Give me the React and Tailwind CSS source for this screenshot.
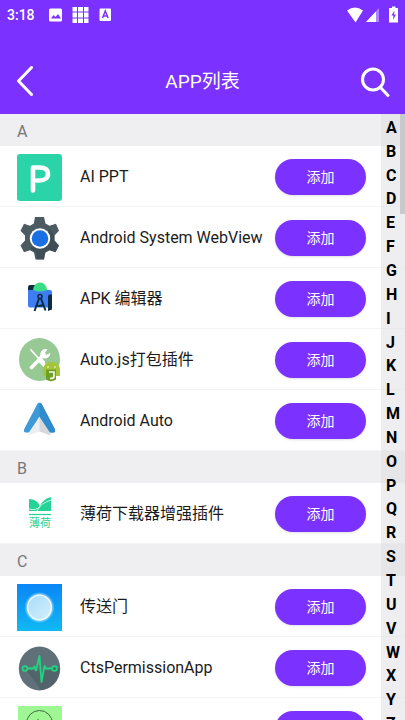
import { useState } from 'react'

// App list grouped by first letter; each entry names the drawing used as its icon.
const SECTIONS = [
  {
    letter: 'A',
    apps: [
      { id: 'ppt', name: 'AI PPT' },
      { id: 'webview', name: 'Android System WebView' },
      { id: 'apk', name: 'APK 编辑器' },
      { id: 'autojs', name: 'Auto.js打包插件' },
      { id: 'auto', name: 'Android Auto' },
    ],
  },
  { letter: 'B', apps: [{ id: 'bohe', name: '薄荷下载器增强插件' }] },
  {
    letter: 'C',
    apps: [
      { id: 'portal', name: '传送门' },
      { id: 'cts', name: 'CtsPermissionApp' },
      { id: 'clock', name: '' },
    ],
  },
]

const LETTERS = 'ABCDEFGHIJKLMNOPQRSTUVWXYZ'.split('')

function AppIcon({ id }) {
  const props = { className: 'h-[47px] w-[45px] shrink-0', viewBox: '0 0 45 47', 'aria-hidden': true }
  switch (id) {
    case 'ppt':
      return (
        <svg {...props}>
          <rect width="45" height="47" rx="3" fill="#2bd3a8" />
          <path d="M16 36.500V13.500h6.500c5.500 0 8.500 2.200 8.500 6.200s-3 6.800-8.500 6.800H20" fill="none" stroke="#fff" strokeWidth="4.600" strokeLinecap="round" strokeLinejoin="round" />
        </svg>
      )
    case 'webview': // gear with a blue hub
      return (
        <svg {...props}>
          <path d="M18 2h9l1.500 6.500 4 2.300L39 8.800l3 7-4.500 4.700v5l4.500 5-3.500 6.700-6-2-4.200 2.300L27 44.500h-8.500L17 37.500l-4-2.300-6 2L3.500 30.500 8 25.500v-5L3.500 15.800 7 8.800l6 2 3.800-2.300z" fill="#4c5b62" />
          <path d="M13 33l6 4.500 1 7h7l1.500-7 4-2.300 6 2 3.500-6.700-4.500-5v-5L33 14z" fill="#36464e" opacity=".55" />
          <circle cx="23" cy="23.500" r="10.200" fill="#fff" />
          <circle cx="23" cy="23.500" r="8.300" fill="#1a6fe3" />
        </svg>
      )
    case 'apk': // folder, android head and a pair of compasses
      return (
        <svg {...props}>
          <path d="M11 12q0-3 2-3h5l2 4v6h-9z" fill="#0b2c42" />
          <path d="M11 14h22q2 0 2 2v13h-3v2.500H13q-2 0-2-2z" fill="#3f7df4" />
          <path d="M16 14a7 7.500 0 0 1 14 0q-7 3-14 0z" fill="#3ddc84" />
          <path d="M32 18.500h3v15l-4 1.500V20z" fill="#0b2c42" />
          <circle cx="23" cy="20.500" r="2" fill="none" stroke="#0b2c42" strokeWidth="1.500" />
          <path d="M22 22.500l-4.500 12.500M24 22.500l4.500 12M20 29.500q3 1 6-.5" fill="none" stroke="#0b2c42" strokeWidth="2" />
        </svg>
      )
    case 'autojs': // crossed tools with a small robot badge
      return (
        <svg {...props}>
          <ellipse cx="22.500" cy="22.500" rx="20.500" ry="21.500" fill="#97c994" />
          <path d="M14 13l9 10" stroke="#fff" strokeWidth="1.800" strokeLinecap="round" />
          <path d="M23 23l6 6" stroke="#fff" strokeWidth="5" strokeLinecap="round" />
          <path d="M14.500 30.500L27 17.500" stroke="#fff" strokeWidth="3.600" strokeLinecap="round" />
          <path d="M30 12.500l-3.500 4.500 1.500 2 5-2.500a5 5 0 0 1-9 2.500 5 5 0 0 1 6-6.500z" fill="#fff" stroke="#fff" />
          <path d="M26 33a8 7.500 0 0 1 17 0z" fill="#a4c639" />
          <path d="M30 28l-2-3M39 28l2-3" stroke="#a4c639" strokeWidth="1.200" />
          <path d="M26 32h17v7H26z" fill="#a4c639" />
          <circle cx="31" cy="30" r=".8" fill="#fff" />
          <circle cx="38" cy="30" r=".8" fill="#fff" />
          <path d="M29 32.500h10v10q-5 3.500-10 0z" fill="#6f9f2a" />
          <path d="M32 35h5v4.500q0 2-4 2" fill="none" stroke="#f3fbd8" strokeWidth="1.700" />
        </svg>
      )
    case 'auto': // blue chevron over a grey arrow
      return (
        <svg {...props}>
          <path d="M22.500 16L34 37.500 22.500 33.500 11 37.500z" fill="#eeeef1" />
          <path d="M22.500 16v17.500L34 37.500z" fill="#d7d8dc" />
          <path d="M20.300 6q2.200-2.500 4.400 0L38 31.500q.5 2.500-1.500 3H33L22.500 18.500 12 34.500H8.500q-2-.5-1.500-3z" fill="#3d9ad9" />
          <path d="M22.500 4.800q1.400 0 2.200 1.200L38 31.500q.5 2.500-1.500 3H33L22.500 18.500z" fill="#2f8bcb" />
        </svg>
      )
    case 'bohe': // mint leaves above the brand name
      return (
        <svg {...props}>
          <path d="M12 8q8 0 11 7 3-7 11-9v14H12z" fill="#25d396" />
          <path d="M12 18q8 2 11-3M34 9q-10 3-14 11" fill="none" stroke="#c9f5e4" strokeWidth="1" />
          <path d="M12 23.500h22" stroke="#25d396" strokeWidth="1.200" />
          <text x="23" y="36" textAnchor="middle" fontSize="11" fill="#25d396" fontFamily="'Noto Sans CJK SC', sans-serif" fontWeight="400">
            薄荷
          </text>
        </svg>
      )
    case 'portal':
      return (
        <svg {...props}>
          <defs>
            <linearGradient id="portalSky" x1="0" y1="0" x2="0" y2="1">
              <stop offset="0" stopColor="#0a86f7" />
              <stop offset="1" stopColor="#10b9f3" />
            </linearGradient>
            <radialGradient id="portalGlow">
              <stop offset=".75" stopColor="#fff" stopOpacity=".8" />
              <stop offset="1" stopColor="#fff" stopOpacity="0" />
            </radialGradient>
            <linearGradient id="portalDisc" x1="0" y1="0" x2="1" y2="1">
              <stop offset="0" stopColor="#a9dcfb" />
              <stop offset="1" stopColor="#d3effc" />
            </linearGradient>
          </defs>
          <rect width="45" height="47" fill="url(#portalSky)" />
          <ellipse cx="22.500" cy="23.500" rx="15" ry="15.500" fill="url(#portalGlow)" />
          <ellipse cx="22.500" cy="23.500" rx="11.800" ry="12.300" fill="url(#portalDisc)" stroke="#f4fbff" strokeWidth="1.300" />
        </svg>
      )
    case 'cts': // pulse line on a slate disc
      return (
        <svg {...props}>
          <ellipse cx="22.500" cy="23.500" rx="20.700" ry="22" fill="#607078" />
          <path d="M9 25l15 20q17-3 19-21l-6-2-9 4z" fill="#53636b" />
          <g fill="none" stroke="#1fd680" strokeWidth="1.800" strokeLinejoin="round">
            <circle cx="8" cy="23.500" r="2.400" />
            <circle cx="37.500" cy="23.500" r="2.400" />
            <path d="M10.500 23.500H16l1.500-2 1.500 4 3.500-14.500 2 26 3-16 1.500 2.500h6" />
          </g>
        </svg>
      )
    default:
      return (
        <svg {...props}>
          <rect x="1" width="44" height="47" fill="#9ef793" />
          <circle cx="22.500" cy="17.500" r="13" fill="none" stroke="#3d6b45" strokeWidth="1" />
          <path d="M19 17l2-3 3 4" fill="none" stroke="#3d6b45" strokeWidth="1.400" />
        </svg>
      )
  }
}

function StatusBar() {
  return (
    <div className="flex h-[30px] items-center justify-between px-[7px] text-white">
      <div className="flex items-center">
        <span className="w-[42px] text-sm font-medium">3:18</span>
        <svg width="64" height="16" viewBox="0 0 64 16" aria-hidden="true">
          <rect x="0" y="1.500" width="13" height="13" rx="1.500" fill="#fff" />
          <path d="M2 11.500l2.500-3.500 2 2L9 7l3 4.500z" fill="#7b31ff" />
          <path d="M23.500 0h4.500v4.500h-4.500zM29 0h5v4.500h-5zM35 0h4.500v4.500H35zM23.500 5.500h4.500v5h-4.500zM29 5.500h5v5h-5zM35 5.500h4.500v5H35zM23.500 11.500h4.500V16h-4.500zM29 11.500h5V16h-5zM35 11.500h4.500V16H35z" fill="#fff" />
          <rect x="50.500" y="1.500" width="11.500" height="12.500" rx="1" fill="#fff" />
          <path d="M53.500 11l2.800-7 2.800 7M54.500 9h3.600" fill="none" stroke="#7b31ff" strokeWidth="1.500" />
        </svg>
      </div>
      <svg width="51" height="18" viewBox="0 0 51 18" aria-hidden="true">
        <path d="M0 4.500q8-6 16 0L8.500 16.500z" fill="#fff" />
        <path d="M32 2v14H19z" fill="#fff" opacity=".4" />
        <path d="M29 5.500V16H19z" fill="#fff" />
        <path d="M43 2h2V.5h3.500V2H51v14.500h-9V2z" fill="#fff" />
        <path d="M47.500 4.500l-3 5h2l-.5 4.500 3-5.500h-2z" fill="#7b31ff" />
      </svg>
    </div>
  )
}

function Header() {
  return (
    <header className="z-10 shrink-0 bg-[#7b31ff] text-white">
      <StatusBar />
      <div className="flex h-[84px] items-center justify-between px-[15px] pt-5">
        <button type="button" aria-label="返回">
          <svg width="30" height="32" viewBox="0 0 30 32" fill="none" stroke="currentColor" strokeWidth="3" strokeLinecap="round" strokeLinejoin="round" aria-hidden="true">
            <path d="M16.500 1.500L3.500 15l13 13.500" />
          </svg>
        </button>
        <h1 className="text-[19px] leading-6 font-normal">APP列表</h1>
        <button type="button" aria-label="搜索">
          <svg width="30" height="32" viewBox="0 0 30 32" fill="none" stroke="currentColor" strokeWidth="3" strokeLinecap="round" aria-hidden="true">
            <circle cx="13" cy="13.500" r="10.500" />
            <path d="M20.500 21.500l7.500 8" />
          </svg>
        </button>
      </div>
    </header>
  )
}

function AppRow({ app, added, onToggle }) {
  return (
    <li className="flex h-[61px] items-center border-b border-[#f4f4f6] pt-[2px] pr-[39px] pl-[17px]">
      <AppIcon id={app.id} />
      <span className="ml-[18px] flex-1 text-base whitespace-nowrap text-[#1c1c1c]">{app.name}</span>
      <button
        type="button"
        aria-label={`添加 ${app.name}`}
        aria-pressed={added}
        onClick={onToggle}
        className="h-9 w-[91px] shrink-0 rounded-full bg-[#7b31ff] text-sm text-white shadow-sm"
      >
        添加
      </button>
    </li>
  )
}

export default function App() {
  const [added, setAdded] = useState({})
  const toggle = (id) => setAdded((prev) => ({ ...prev, [id]: !prev[id] }))

  return (
    <div className="flex h-screen flex-col overflow-hidden bg-white font-[Roboto,'Noto_Sans_CJK_SC',sans-serif]">
      <Header />
      <main className="relative min-h-0 flex-1 overflow-hidden">
        {SECTIONS.map((section) => (
          <section key={section.letter} id={section.letter}>
            <h2 className="flex h-8 items-center bg-[#efeef1] pt-1 pl-[17px] text-base font-normal text-[#777]">
              {section.letter}
            </h2>
            <ul>
              {section.apps.map((app) => (
                <AppRow key={app.id} app={app} added={!!added[app.id]} onToggle={() => toggle(app.id)} />
              ))}
            </ul>
          </section>
        ))}

        {/* Letter index floats over the list */}
        <nav className="absolute top-0 right-0 grid h-[622px] w-6 auto-rows-fr bg-[#dedee2]/50 pt-[2px] pl-[5px]">
          {LETTERS.map((l) => (
            <a key={l} href={`#${l}`} className="flex items-center text-base leading-none font-bold text-black">
              {l}
            </a>
          ))}
        </nav>
        <div className="absolute top-0 right-0 h-[100px] w-[5px] bg-[#c9c9cc]" />
      </main>
    </div>
  )
}
